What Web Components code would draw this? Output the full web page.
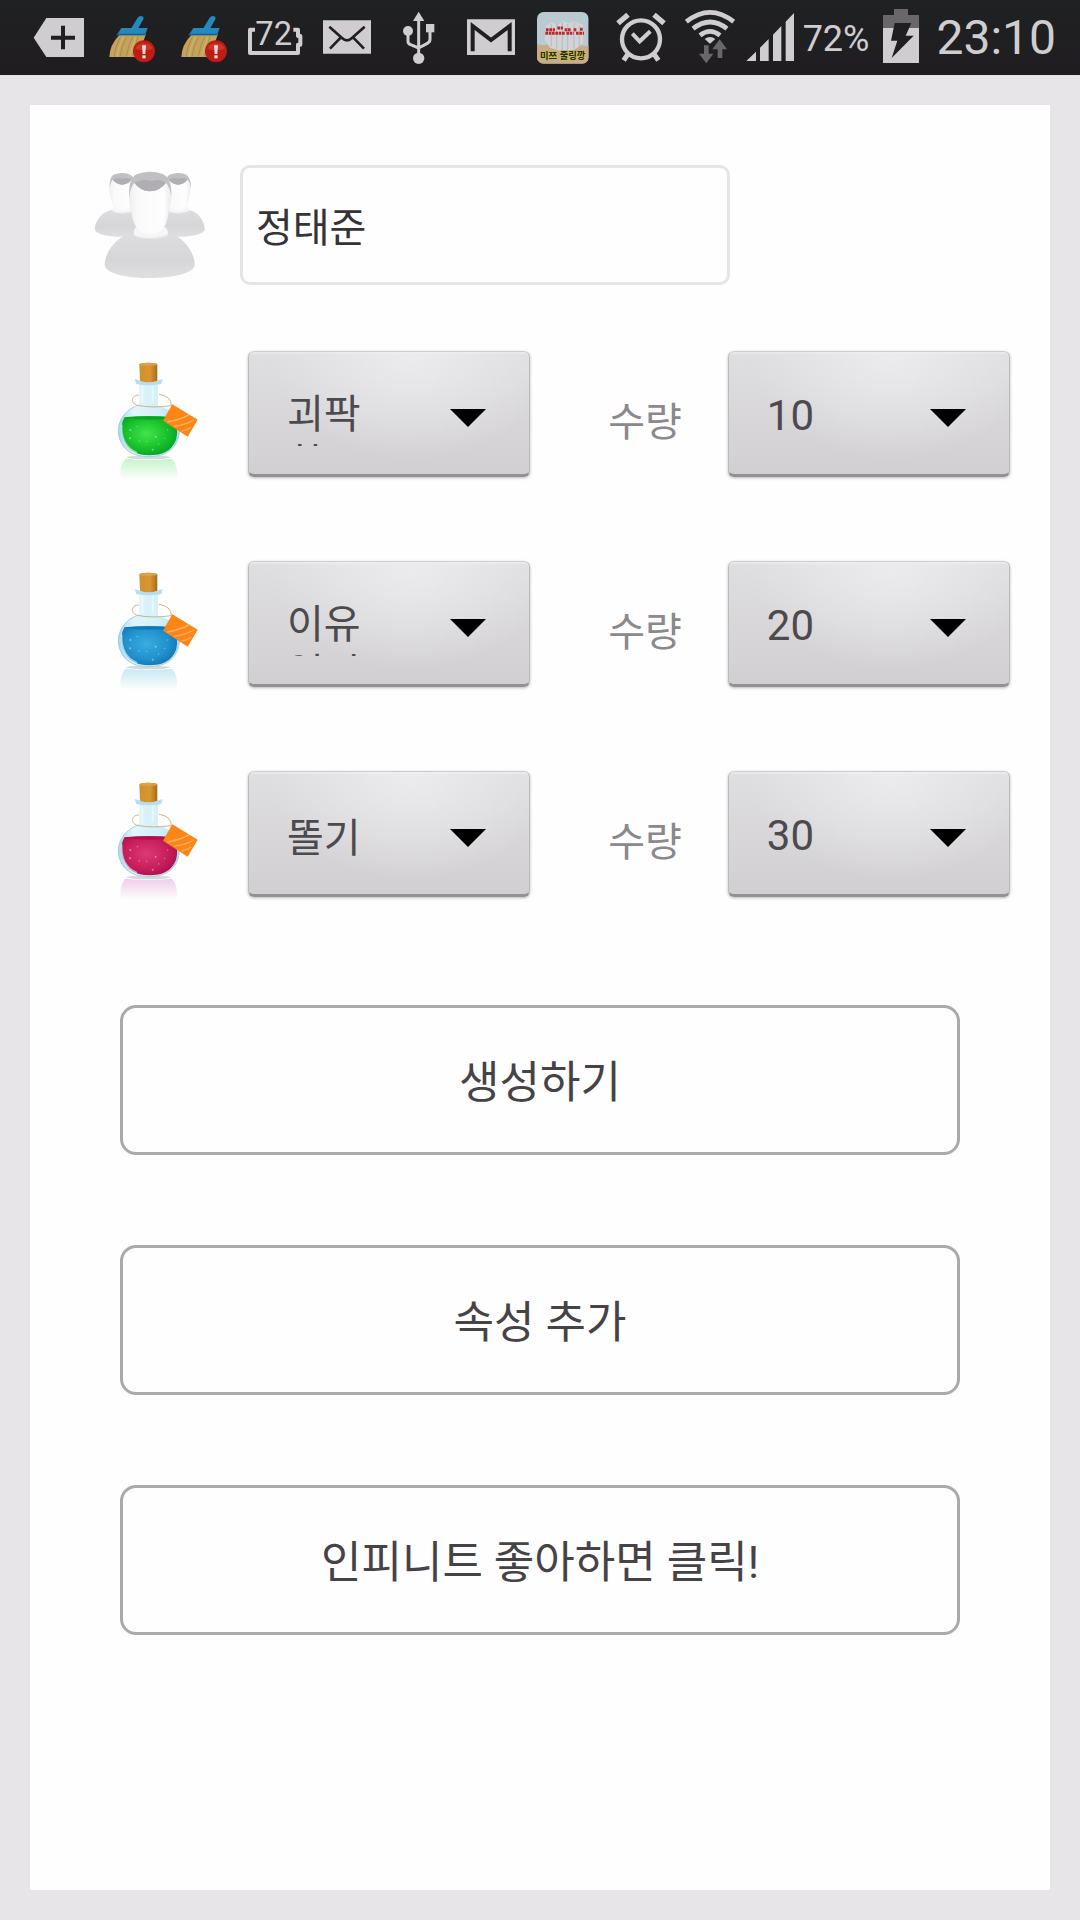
<!DOCTYPE html>
<html lang="ko">
<head>
<meta charset="utf-8">
<meta name="viewport" content="width=device-width, initial-scale=1">
<title>물약 만들기</title>
<style>
html{background:#e7e5e8}
body{margin:0;min-height:100vh;display:flex;flex-direction:column;font-family:Roboto,"Noto Sans CJK KR",sans-serif;color:#454346}
</style>
</head>
<body>
<status-bar></status-bar>
<form-card>
  <name-field value="정태준"></name-field>
  <potion-row tone="green" kind="괴팍한" amount="10"></potion-row>
  <potion-row tone="blue" kind="이유없이" amount="20"></potion-row>
  <potion-row tone="red" kind="똘기" amount="30"></potion-row>
  <action-button slot="actions">생성하기</action-button>
  <action-button slot="actions">속성 추가</action-button>
  <action-button slot="actions">인피니트 좋아하면 클릭!</action-button>
</form-card>

<script>
class BaseElement extends HTMLElement {
  connectedCallback() {
    if (this.shadowRoot) return;
    this.attachShadow({ mode: 'open' }).innerHTML = this.render();
    this.ready();
  }
  ready() {}
}

const broom = x => `
<svg viewBox="${x} 0 216 225"><g transform="translate(${x - 288} 0)">
  <path d="M358 105Q329 135 328 171H412L438 103Z" fill="#c4a35c"/>
  <path d="M362 110Q346 138 342 170M380 110Q364 138 360 170M398 110Q384 138 379 170M415 108Q404 138 398 168" stroke="#ab8b48" stroke-width="3" fill="none"/>
  <path d="M371 110Q355 138 351 170M408 110Q396 138 389 170" stroke="#d3b76f" stroke-width="3" fill="none"/>
  <path d="M364 84H443L435 106H350Z" fill="#2689bd"/><path d="M350 101H438L435 106H350Z" fill="#155f8d"/>
  <path d="M394 85L413 53Q420 44 430 51Q433 57 427 63L414 86Z" fill="#2689bd"/>
  <circle cx="432" cy="154" r="33" fill="#bd1d14"/><path d="M406 146A28 26 0 0 1 458 146Q432 156 406 146Z" fill="#d34737" opacity=".6"/>
  <path d="M426 136H438L436 162H428Z" fill="#e3d9db"/><rect x="427" y="166" width="10" height="9" fill="#e3d9db"/>
</g></svg>`;

class StatusBar extends BaseElement {
  render() { return `
<style>
:host{display:flex;align-items:center;height:75px;box-sizing:border-box;padding:0 24px;background:linear-gradient(#1f2123,#201d21);color:#cfcdd0;white-space:nowrap}
svg{display:block;height:75px;flex:none}
.left svg{width:72px}
.left,.right{display:flex;align-items:center}
.right{margin-left:auto}
.percent{font-size:36px;line-height:75px;margin:4px 6px 0 4px}
.clock{font-size:48px;line-height:75px}
</style>
<div class="left">
<svg viewBox="72 0 216 225"><path d="M101 113L139 54H252V171H139Z" fill="#cfcdd0"/><path d="M189 77V148M153 113H225" stroke="#201e21" stroke-width="12"/></svg>
${broom(288)}${broom(504)}
<svg viewBox="720 0 216 225"><path d="M765 89H750V159H894V134H901V108H894V89H880" fill="none" stroke="#cfcdd0" stroke-width="12" stroke-linejoin="round"/><text x="821" y="136" text-anchor="middle" font-family="Roboto,sans-serif" font-size="98" fill="#cfcdd0">72</text></svg>
<svg viewBox="936 0 216 225"><path d="M969 61H1113V161H969Z" fill="#cfcdd0"/><path d="M988 80L1026 114Q1041 128 1056 114L1094 80M990 146L1022 113M1092 146L1060 113" fill="none" stroke="#201e21" stroke-width="8"/></svg>
<svg viewBox="1152 0 216 225"><g fill="none" stroke="#cfcdd0" stroke-width="9"><path d="M1256 58V166M1224 98V124Q1224 132 1232 134L1256 144M1290 92V118Q1290 126 1282 130L1256 144"/></g><g fill="#cfcdd0"><path d="M1239 63L1256 35L1273 63Z"/><circle cx="1224" cy="93" r="15"/><path d="M1278 72H1303V97H1278Z"/><circle cx="1256" cy="175" r="17"/></g></svg>
<svg viewBox="1368 0 216 225"><path d="M1401 58H1545V165H1401Z" fill="#cfcdd0"/><path d="M1418 154V78L1473 120L1529 78V154" fill="none" stroke="#201e21" stroke-width="12"/></svg>
<svg viewBox="1584 0 216 225"><defs><clipPath id="app"><rect x="1611" y="36" width="155" height="155" rx="20"/></clipPath></defs><g clip-path="url(#app)"><path d="M1611 36H1766V191H1611Z" fill="#b9cad1"/><path d="M1611 132Q1630 139 1650 132L1766 138V191H1611Z" fill="#c9ab89"/><path d="M1639 76L1656 66L1674 76L1688 62L1706 70L1720 64L1748 74L1750 128L1726 148L1689 156L1650 143L1634 120Z" fill="#d2d3d6"/><path d="M1654 72V140M1670 72V148M1687 66V153M1703 72V150M1722 68V147M1738 76V137" stroke="#bbc1c8" stroke-width="4"/><path d="M1638 89H1665M1672 84H1689M1694 89H1712M1721 89H1730M1740 88H1750M1636 100H1694M1699 100H1721M1728 100H1752" stroke="#b72b2a" stroke-width="9" stroke-dasharray="8 2"/><text x="1688" y="178" text-anchor="middle" font-family="Noto Sans CJK KR,sans-serif" font-size="28" font-weight="700" fill="#292514" stroke="#c4bd45" stroke-width="4" paint-order="stroke">미쯔 줄링깡</text></g></svg>
</div>
<div class="right">
<svg width="72" viewBox="1812 0 216 225"><g fill="none" stroke="#cfcdd0"><circle cx="1920" cy="118" r="57" stroke-width="13"/><path d="M1894 101L1916 124L1948 94" stroke-width="12"/><path d="M1851 70L1881 44M1989 70L1959 44" stroke-width="16"/><path d="M1880 163L1868 181M1960 163L1972 181" stroke-width="15"/></g></svg>
<svg width="64" viewBox="2028 0 192 225"><g fill="none" stroke="#cfcdd0" stroke-width="14"><path d="M2056 65Q2127 9 2198 65"/><path d="M2076 86Q2127 46 2178 86"/><path d="M2097 106Q2127 82 2157 106"/></g><path d="M2111 117Q2127 105 2143 117L2127 131Z" fill="#cfcdd0"/><path d="M2109 136H2123V161H2137L2116 190L2094 161H2109ZM2150 174V148H2134L2156 118L2178 148H2164V174Z" fill="#69676a"/></svg>
<svg width="58" viewBox="2220 0 174 225"><path d="M2236 183L2265 155V183ZM2277 143L2303 117V183H2277ZM2316 104L2341 78V183H2316ZM2354 65L2379 39V183H2354Z" fill="#cfcdd0"/></svg>
<span class="percent">72%</span>
<svg width="61" viewBox="2625 0 183 225"><path d="M2682 27H2724V45H2757V85H2649V45H2682Z" fill="#69676a"/><path d="M2649 84H2757V189H2649Z" fill="#cfcdd0"/><path d="M2684 69H2734L2717 107H2741L2675 174L2692 122H2673Z" fill="#201e21"/></svg>
<time class="clock">23:10</time>
</div>`; }
}

class FormCard extends BaseElement {
  render() { return `
<style>
:host{display:flex;flex-direction:column;flex:1;box-sizing:border-box;margin:30px;padding-top:60px;padding-bottom:60px;background:#fefefe}
.fields{display:flex;flex-direction:column;gap:84px}
.actions{display:flex;flex-direction:column;gap:90px;margin-top:108px;padding:0 90px}
::slotted(name-field){margin-bottom:-18px}
</style>
<div class="fields"><slot></slot></div>
<div class="actions"><slot name="actions"></slot></div>`; }
}

class NameField extends BaseElement {
  render() { return `
<style>
:host{display:flex;gap:30px;padding:0 60px}
label,svg{display:block;width:120px;height:120px;flex:none}
input{box-sizing:border-box;height:120px;width:490px;min-width:0;margin:0;padding:0 13px;border:3px solid #e6e4e7;border-radius:10px;background:#fefefe;font:inherit;font-size:40px;color:#353336;outline:0}
</style>
<label for="name" aria-label="이름"><svg viewBox="30 45 360 360">
<defs>
<linearGradient id="body" x2="0" y2="1"><stop stop-color="#dddcde"/><stop offset=".6" stop-color="#d6d5d7"/><stop offset="1" stop-color="#dfdee0"/></linearGradient>
<linearGradient id="face"><stop stop-color="#eeedef"/><stop offset=".2" stop-color="#fafafb"/><stop offset=".8" stop-color="#fdfdfd"/><stop offset="1" stop-color="#ecebed"/></linearGradient>
<g id="person">
<path d="M160 250C112 256 76 304 74 342C72 370 140 384 208 384S348 370 344 342C342 304 308 256 262 250Z" fill="url(#body)"/>
<path d="M166 232Q156 254 168 260Q210 274 258 260Q270 254 258 232Z" fill="#f6f5f7"/><path d="M164 258Q210 274 262 256" fill="none" stroke="#e4e3e6" stroke-width="3"/>
<path d="M150 100Q142 150 154 186C160 232 180 252 212 252S260 232 266 186Q280 140 270 100Q210 70 150 100Z" fill="url(#face)"/>
<path d="M148 144Q144 86 170 73Q208 58 248 72Q276 84 274 140Q270 112 258 98Q242 122 208 124Q178 120 163 98Q150 112 148 144Z" fill="#c0bfc2"/>
<path d="M163 98Q190 84 214 94Q238 84 258 98Q242 122 208 124Q178 120 163 98Z" fill="#b0aeb2"/>
</g></defs>
<use href="#person" transform="translate(0 30) scale(.6)"/>
<use href="#person" transform="translate(168 30) scale(.6)"/>
<use href="#person"/>
</svg></label>
<input id="name" type="text" value="${this.getAttribute('value')}">`; }
}

class PotionBottle extends BaseElement {
  render() {
    const [a, b, c, r] = {
      green: ['#42e54c', '#16bf29', '#079a21', '#c4f5ca'],
      blue: ['#3aaddf', '#2190cd', '#0d70ae', '#c6e9f3'],
      red: ['#dc3a75', '#c71d5b', '#a60d48', '#f0cdec']
    }[this.getAttribute('tone')];
    return `
<style>:host{display:block}svg{display:block;width:120px;height:126px;overflow:visible}</style>
<svg viewBox="0 33 360 378" aria-hidden="true">
<defs>
<radialGradient id="liquid" cx=".45" cy=".45" r=".65"><stop stop-color="${a}"/><stop offset=".6" stop-color="${b}"/><stop offset="1" stop-color="${c}"/></radialGradient>
<linearGradient id="glass"><stop stop-color="#a7d8ef"/><stop offset=".25" stop-color="#e0f5fb"/><stop offset=".7" stop-color="#d2eff8"/><stop offset="1" stop-color="#aad7ef"/></linearGradient>
<linearGradient id="cork"><stop stop-color="#d1902c"/><stop offset=".6" stop-color="#d99632"/><stop offset="1" stop-color="#aa691b"/></linearGradient>
<linearGradient id="mirror" x2="0" y2="1"><stop stop-color="${r}"/><stop offset="1" stop-color="${r}" stop-opacity="0"/></linearGradient>
</defs>
<path d="M76 356Q145 364 215 356Q236 374 230 420H64Q54 382 76 356Z" fill="url(#mirror)"/>
<ellipse cx="145" cy="352" rx="66" ry="6" fill="#d6dadd"/>
<path d="M118 126H174V197C218 207 240 238 238 274C235 319 205 351 147 351S58 321 55 274C53 237 79 207 118 197Z" fill="url(#glass)"/>
<path d="M118 195C79 205 55 238 55 274C58 320 90 350 147 350S235 319 238 274" fill="none" stroke="#9dcfe8" stroke-width="3"/>
<path d="M73 232Q145 224 220 232Q238 264 228 300C215 333 187 346 147 346S82 331 68 294Q58 260 73 232Z" fill="url(#liquid)"/>
<path d="M73 233Q145 226 220 233Q145 245 73 233Z" fill="${c}" opacity=".7"/>
<path d="M65 254Q62 318 111 338" fill="none" stroke="#dbf6f6" stroke-width="5" opacity=".65"/>
<g fill="#d8f7f7" opacity=".5"><circle cx="91" cy="270" r="3"/><circle cx="112" cy="260" r="2"/><circle cx="90" cy="295" r="3"/><circle cx="118" cy="303" r="2"/><circle cx="140" cy="304" r="2"/><circle cx="167" cy="290" r="3"/><circle cx="176" cy="312" r="2"/><circle cx="158" cy="329" r="3"/><circle cx="194" cy="295" r="2"/><circle cx="203" cy="270" r="2"/></g>
<path d="M104 117Q146 134 188 117L184 132Q146 140 109 132Z" fill="#b8dcf2"/>
<path d="M127 138V190M158 138V188" stroke="#f2fcff" stroke-width="6" opacity=".7"/>
<path d="M118 72Q145 64 172 72V122Q145 131 120 122Z" fill="url(#cork)"/><ellipse cx="145" cy="73" rx="27" ry="5" fill="#dca14b"/>
<path d="M117 165C91 166 92 190 112 196Q155 205 214 197Q214 168 177 163" fill="none" stroke="#c9b68a" stroke-width="3"/>
<path d="M217 193L293 239L263 290L189 242Z" fill="#fb8515"/><path d="M202 246Q240 240 268 224M222 259Q254 255 282 240M245 273Q261 271 274 261" fill="none" stroke="#ffb066" stroke-width="4"/>
</svg>`;
  }
}

class PotionRow extends BaseElement {
  render() {
    const kind = this.getAttribute('kind'), amount = this.getAttribute('amount');
    const options = (list, value) => list.map(v => `<option${v === value ? ' selected' : ''}>${v}</option>`).join('');
    return `
<style>
:host{display:grid;grid-template-columns:148px minmax(0,1fr) auto minmax(0,1fr);align-items:center;padding:0 40px 0 70px}
.drop{display:grid}
.drop>*{grid-area:1/1}
select{appearance:none;box-sizing:border-box;display:block;width:100%;height:126px;margin:0;padding:4px 90px 0 38px;border:1px solid #bbb9bc;border-top-color:#cfcdd0;border-bottom:3px solid #939194;border-radius:6px;outline:0;
 background:radial-gradient(ellipse at 58% 0,#ecebed,#ecebed00 62%),linear-gradient(#dfdee0,#d1cfd2);
 box-shadow:0 1px 3px #77757880,inset 0 2px 1px #f2f1f380;font:inherit;font-size:42px;color:#4c4a4d}
.kind select{color:transparent}
option{color:#4c4a4d}
.kind span{display:grid;align-content:safe center;align-self:end;width:96px;height:56px;margin:0 0 31px 39px;overflow:hidden;word-break:break-all;font-size:40px;line-height:49px;color:#4c4a4d;pointer-events:none;z-index:1}
.arrow{justify-self:end;align-self:center;width:36px;height:18px;margin:8px 44px 0 0;pointer-events:none;z-index:1}
label{font-size:40px;line-height:48px;color:#8b898c;padding:18px 46px 0 78px}
</style>
<potion-bottle tone="${this.getAttribute('tone')}"></potion-bottle>
<div class="drop kind">
<select id="kind" aria-label="종류">${options(['괴팍한', '이유없이', '똘기'], kind)}</select>
<span aria-hidden="true">${kind}</span>
<svg class="arrow" viewBox="0 0 36 18"><path d="M0 0H36L18 18Z"/></svg>
</div>
<label for="amount">수량</label>
<div class="drop">
<select id="amount">${options(['10', '20', '30'], amount)}</select>
<svg class="arrow" viewBox="0 0 36 18"><path d="M0 0H36L18 18Z"/></svg>
</div>`;
  }
  ready() {
    const select = this.shadowRoot.getElementById('kind');
    select.addEventListener('change', () => {
      this.shadowRoot.querySelector('.kind span').textContent = select.value;
    });
  }
}

class ActionButton extends BaseElement {
  render() { return `
<style>
:host{display:block}
button{display:block;box-sizing:border-box;width:100%;height:150px;margin:0;padding:6px 0 0;border:3px solid #aaa8ab;border-radius:16px;background:#fefefe;font:inherit;font-size:44px;line-height:56px;color:#454346}
</style>
<button type="button"><slot></slot></button>`; }
}

customElements.define('status-bar', StatusBar);
customElements.define('form-card', FormCard);
customElements.define('name-field', NameField);
customElements.define('potion-bottle', PotionBottle);
customElements.define('potion-row', PotionRow);
customElements.define('action-button', ActionButton);
</script>
</body>
</html>
